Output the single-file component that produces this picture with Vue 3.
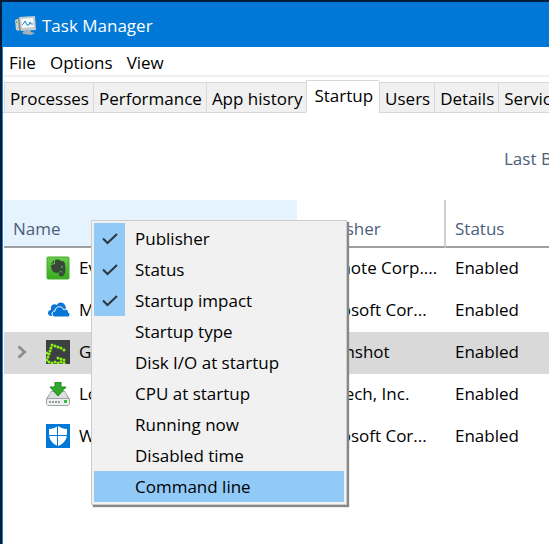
<template>
  <div class="window">
    <header class="title-bar">
      <svg class="app-icon" viewBox="0 0 22 20">
        <path d="M1 3 L6 2 L7 15 L2 14 Z" fill="#7f8b92" />
        <path d="M0 4 L3 3 L4 15 L1 14 Z" fill="#c9d0d4" />
        <rect x="1" y="5" width="1" height="2" fill="#59c22d" />
        <path d="M9 15 L15 14 L16 16 L20 17 L16 19 L9 18 L7 17 Z" fill="#a9b0b5" />
        <path d="M4 1 L20 0 L21 14 L6 15 Z" fill="#c4cacd" />
        <path d="M6 3 L18 2 L19 11 L7 12 Z" fill="#f3f9fd" />
        <path d="M7 9 L9 7 L10 5 L12 9 L14 9 L15 6 L16 8 L18 8" fill="none" stroke="#2386bd" stroke-width="1" />
      </svg>
      <h1>Task Manager</h1>
    </header>

    <nav class="menu-bar">
      <button v-for="menu in menus" :key="menu" type="button">{{ menu }}</button>
    </nav>

    <div class="tabs" role="tablist">
      <button
        v-for="tab in tabs"
        :key="tab"
        type="button"
        role="tab"
        class="tab"
        :class="{ active: tab === activeTab }"
        :aria-selected="tab === activeTab"
        @click="activeTab = tab"
      >
        {{ tab }}
      </button>
    </div>

    <p class="bios-time">Last BIOS time:</p>

    <div class="table-area">
      <table>
        <thead>
          <tr>
            <th class="name-column">Name</th>
            <th class="publisher-column">Publisher</th>
            <th>Status</th>
          </tr>
        </thead>
        <tbody>
          <tr v-for="app in apps" :key="app.id" :class="{ selected: app.id === selectedId }" @click="selectedId = app.id">
            <td>
              <div class="name-cell">
                <span class="expander">
                  <svg v-if="app.group" viewBox="0 0 10 14" width="10" height="14">
                    <path d="M1.5 1.5 L7.5 7 L1.5 12.5" fill="none" stroke="#8f8f8f" stroke-width="3" />
                  </svg>
                </span>
                <svg v-if="app.icon === 'evernote'" class="icon" viewBox="0 0 24 24">
                  <defs>
                    <linearGradient id="green" x1="0" y1="0" x2="0" y2="1">
                      <stop offset="0" stop-color="#6ccb4b" />
                      <stop offset="1" stop-color="#36ab1c" />
                    </linearGradient>
                  </defs>
                  <rect x="1" y="1" width="22" height="22" rx="1" fill="url(#green)" stroke="#45ad2c" />
                  <path d="M5 9 L9 8 L9 4 C12 3 14 4 15 5 C18 5 19 6 19 9 C20 14 19 19 17 20 C14 21 12 19 13 17 C14 15 16 16 16 17 L15 18 C17 18 17 15 15 15 C13 15 13 17 11 17 C7 17 5 14 5 9 Z" fill="#39483a" />
                  <path d="M5 8 L8 4 L8 7 Z" fill="#39483a" />
                  <circle cx="16" cy="11" r="1" fill="#52af3c" />
                </svg>
                <svg v-else-if="app.icon === 'onedrive'" class="icon" viewBox="0 0 24 24">
                  <path d="M5 18 C1 18 1 12 5 12 C4 7 8 5 11 7 C13 3 19 4 20 10 L19 12 L8 18 Z" fill="#0c75d2" />
                  <path d="M9 19 C5 19 5 13 9 13 C9 8 16 7 18 12 C20 10 23 12 22 14 C25 15 24 19 22 19 Z" fill="#0875d8" stroke="#fff" stroke-width="1" />
                </svg>
                <svg v-else-if="app.icon === 'greenshot'" class="icon" viewBox="0 0 24 24">
                  <rect width="24" height="24" fill="#3d4041" />
                  <g fill="#88f116">
                    <circle v-for="(dot, i) in greenshotDots" :key="i" :cx="dot[0]" :cy="dot[1]" r="1.5" />
                  </g>
                </svg>
                <svg v-else-if="app.icon === 'logitech'" class="icon" viewBox="0 0 24 24">
                  <path d="M5 9 H19 L24 17 V22 L22 24 H2 L0 22 V17 Z" fill="#a1a5a6" />
                  <path d="M5 10 H19 L22 16 H2 Z" fill="#dcdfdf" />
                  <rect x="1" y="17" width="22" height="6" rx="1" fill="#eef0f0" />
                  <path d="M3 20 H15" stroke="#999da0" stroke-width="2" stroke-dasharray="2 1" />
                  <rect x="18" y="18" width="3" height="3" fill="#38bd36" />
                  <path d="M9 0 H15 V5 H20 L12 14 L4 5 H9 Z" fill="#2fa82b" stroke="#24891f" stroke-width="1" />
                </svg>
                <svg v-else class="icon" viewBox="0 0 24 24">
                  <rect width="24" height="24" fill="#0078d7" />
                  <path d="M12 2 C15 4 18 5 21 5 V10 C21 16 17 20 12 22 C7 20 3 16 3 10 V5 C6 5 9 4 12 2 Z" fill="#fff" />
                  <path d="M11.5 2 V22 M2 11.5 H22" stroke="#0078d7" stroke-width="1" />
                </svg>
                <span>{{ app.name }}</span>
              </div>
            </td>
            <td>{{ app.publisher }}</td>
            <td>{{ app.status }}</td>
          </tr>
        </tbody>
      </table>

      <div class="context-menu" role="menu">
        <button
          v-for="column in columns"
          :key="column.label"
          type="button"
          role="menuitemcheckbox"
          class="menu-item"
          :class="{ highlighted: column.label === highlighted }"
          :aria-checked="column.shown"
          @click="column.shown = !column.shown"
          @mouseenter="highlighted = column.label"
        >
          <span class="check" :class="{ checked: column.shown }">
            <svg v-if="column.shown" viewBox="0 0 16 12" width="16" height="12">
              <path d="M1 5.5 L5.5 10 L15 1" fill="none" stroke="#2c3740" stroke-width="2" />
            </svg>
          </span>
          <span>{{ column.label }}</span>
        </button>
      </div>
    </div>
  </div>
</template>

<script setup>
import { ref } from 'vue';

const menus = ['File', 'Options', 'View'];
const tabs = ['Processes', 'Performance', 'App history', 'Startup', 'Users', 'Details', 'Services'];
const activeTab = ref('Startup');

const apps = [
  { id: 1, name: 'Evernote Clipper', publisher: 'Evernote Corp....', status: 'Enabled', icon: 'evernote' },
  { id: 2, name: 'Microsoft OneDrive', publisher: 'Microsoft Cor...', status: 'Enabled', icon: 'onedrive' },
  { id: 3, name: 'Greenshot', publisher: 'Greenshot', status: 'Enabled', icon: 'greenshot', group: true },
  { id: 4, name: 'Logitech Download', publisher: 'Logitech, Inc.', status: 'Enabled', icon: 'logitech' },
  { id: 5, name: 'Windows Defender', publisher: 'Microsoft Cor...', status: 'Enabled', icon: 'defender' }
];
const selectedId = ref(3);

const columns = ref([
  { label: 'Publisher', shown: true },
  { label: 'Status', shown: true },
  { label: 'Startup impact', shown: true },
  { label: 'Startup type', shown: false },
  { label: 'Disk I/O at startup', shown: false },
  { label: 'CPU at startup', shown: false },
  { label: 'Running now', shown: false },
  { label: 'Disabled time', shown: false },
  { label: 'Command line', shown: false }
]);
const highlighted = ref('Command line');

// dots that form the letter G of the Greenshot icon
const greenshotDots = [
  [6, 5], [9, 6], [12, 7], [15, 8], [18, 10],
  [5, 8], [4, 11], [3, 14], [2, 17], [1, 13], [1, 20],
  [3, 22], [6, 23], [9, 22], [12, 23],
  [12, 18], [15, 19], [18, 20], [15, 22], [18, 23]
];
</script>

<style>
body {
  background: #fff;
}
</style>

<style scoped>
.window {
  min-height: 100vh;
  box-sizing: border-box;
  border-top: 2px solid #071c3a;
  border-left: 2px solid #071c3a;
  box-shadow: inset 1px 0 #1c82d8;
  background: #fff;
  overflow: hidden;
  font-family: "Open Sans", "Noto Sans", sans-serif;
  font-size: 17px;
  line-height: 24px;
  color: #000;
}

button {
  font: inherit;
  color: inherit;
  border: none;
  background: none;
  padding: 0;
  white-space: nowrap;
}

.title-bar {
  display: flex;
  align-items: center;
  gap: 5px;
  height: 45px;
  padding: 2px 0 0 13px;
  box-sizing: border-box;
  background: #0078d7;
  color: #fff;
}

.title-bar h1 {
  margin: 0;
  font-size: 17px;
  font-weight: 400;
}

.app-icon {
  width: 22px;
  height: 20px;
}

.menu-bar {
  display: flex;
  align-items: center;
  gap: 14px;
  height: 28px;
  margin-left: 1px;
  padding: 4px 0 0 6px;
  box-sizing: border-box;
}

.tabs {
  display: flex;
  align-items: flex-end;
  height: 38px;
  margin-left: 1px;
  padding-left: 1px;
  box-sizing: border-box;
  border-top: 2px solid #f0f0f0;
  box-shadow: inset 0 -1px #d9d9d9;
}

.tab {
  flex: none;
  height: 31px;
  padding: 2px 4px 0 5px;
  box-sizing: border-box;
  border: 1px solid #d9d9d9;
  border-right: none;
  background: #f0f0f0;
}

.tab.active {
  height: 33px;
  padding: 0 6px 2px 7px;
  border-bottom-color: #fff;
  background: #fff;
}

.bios-time {
  height: 87px;
  margin: 0;
  padding: 34px 0 0 502px;
  box-sizing: border-box;
  white-space: nowrap;
  color: #4c607a;
}

.table-area {
  position: relative;
  margin-left: 2px;
}

table {
  width: 100%;
  table-layout: fixed;
  border-collapse: separate;
  border-spacing: 0;
}

th {
  height: 48px;
  padding: 12px 0 0 9px;
  box-sizing: border-box;
  border-bottom: 2px solid #a0a0a0;
  text-align: left;
  font-weight: 400;
  color: #4c607a;
}

.name-column {
  width: 293px;
  background: #e5f3ff;
}

.publisher-column {
  width: 149px;
  border-right: 2px solid #d0d0d0;
}

td {
  height: 42px;
  padding: 0 0 2px 9px;
  box-sizing: border-box;
  white-space: nowrap;
}

.name-cell {
  display: flex;
  align-items: center;
}

.expander {
  display: flex;
  width: 33px;
  padding-left: 4px;
  box-sizing: border-box;
}

.icon {
  width: 24px;
  height: 24px;
  margin-right: 9px;
}

.selected td {
  background: #d9d9d9;
}

.context-menu {
  position: absolute;
  top: 20px;
  left: 87px;
  width: 256px;
  padding: 2px;
  box-sizing: border-box;
  border: 1px solid #ccc;
  background: #f1f1f1;
  box-shadow: 2px 2px 1px #888;
}

.menu-item {
  display: flex;
  align-items: center;
  width: 100%;
  height: 31px;
}

.highlighted {
  background: #91c9f7;
}

.check {
  display: flex;
  align-items: center;
  justify-content: center;
  width: 31px;
  height: 31px;
  margin-right: 10px;
}

.checked {
  background: #91c9f7;
}
</style>
